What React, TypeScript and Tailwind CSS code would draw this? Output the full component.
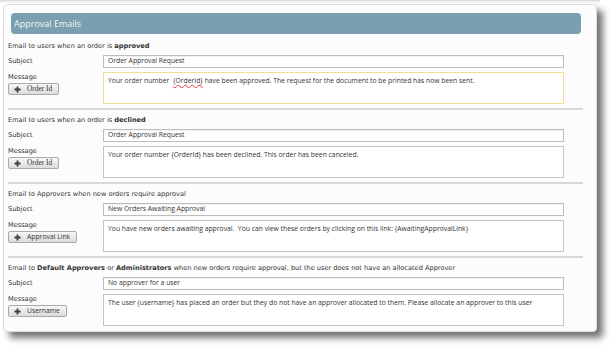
import React from "react";

type Section = {
    title: React.ReactNode;
    subject: string;
    message: React.ReactNode;
    button: string;
    serifButton?: boolean;
    focused?: boolean;
};

const sections: Section[] = [
    {
        title: (
            <>
                Email to users when an order is <b>approved</b>
            </>
        ),
        subject: "Order Approval Request",
        message: (
            <>
                {"Your order number  "}
                <span className="underline decoration-wavy decoration-[#e23b3b] decoration-[0.5px] underline-offset-1">
                    {"{OrderId}"}
                </span>
                {" have been approved. The request for the document to be printed has now been sent."}
            </>
        ),
        button: "Order Id",
        serifButton: true,
        focused: true,
    },
    {
        title: (
            <>
                Email to users when an order is <b>declined</b>
            </>
        ),
        subject: "Order Approval Request",
        message: "Your order number {OrderId} has been declined. This order has been canceled.",
        button: "Order Id",
        serifButton: true,
    },
    {
        title: "Email to Approvers when new orders require approval",
        subject: "New Orders Awaiting Approval",
        message:
            "You have new orders awaiting approval.  You can view these orders by clicking on this link: {AwaitingApprovalLink}",
        button: "Approval Link",
    },
    {
        title: (
            <>
                Email to <b>Default Approvers</b> or <b>Administrators</b> when new orders require approval,
                but the user does not have an allocated Approver
            </>
        ),
        subject: "No approver for a user",
        message:
            "The user {username} has placed an order but they do not have an approver allocated to them. Please allocate an approver to this user",
        button: "Username",
    },
];

const labelFont = "font-['DejaVu_Sans',Verdana,sans-serif] text-[6.6px] text-[#333]";
const fieldFont = "font-['Open_Sans','Liberation_Sans',sans-serif] text-[6.8px] text-[#333]";

const PlusIcon = () => (
    <svg width="7" height="7" viewBox="0 0 7 7" className="shrink-0">
        <path d="M3.5 0.5v6M0.5 3.5h6" stroke="#3d3d3d" strokeWidth="1.8" />
    </svg>
);

const EmailSection: React.FC<{ section: Section; last: boolean }> = ({ section, last }) => (
    <div>
        <div className={`flex h-[12px] items-center whitespace-nowrap ${labelFont}`}>
            <span>{section.title}</span>
        </div>

        <div className="mt-[2px] flex h-[13px]">
            <div className={`flex w-[95px] items-center ${labelFont}`}>Subject</div>
            <div
                className={`flex w-[461px] items-center border border-[#bdbdbd] bg-white pl-[4px] shadow-[inset_0_1px_1px_rgba(0,0,0,0.06)] ${fieldFont}`}
            >
                {section.subject}
            </div>
        </div>

        <div className="mt-[4px] flex h-[32px]">
            <div className="flex w-[95px] flex-col">
                <div className={`flex h-[11px] items-center ${labelFont}`}>Message</div>
                <div className="flex">
                    <div className="flex h-[12px] items-center gap-[6px] rounded-[2px] border border-[#a9a9a9] bg-gradient-to-b from-[#f7f7f7] to-[#dcdcdc] pl-[5px] pr-[6px]">
                        <PlusIcon />
                        <span
                            className={
                                section.serifButton
                                    ? "font-['Liberation_Serif',serif] text-[7.4px] text-[#333]"
                                    : "font-['Open_Sans','Liberation_Sans',sans-serif] text-[6.8px] text-[#333]"
                            }
                        >
                            {section.button}
                        </span>
                    </div>
                </div>
            </div>
            <div
                className={`w-[461px] whitespace-pre-wrap border bg-white pl-[4px] pt-[3px] leading-[9px] ${fieldFont} ${
                    section.focused ? "border-[#f0df8e]" : "border-[#c4c4c4]"
                }`}
            >
                {section.message}
            </div>
        </div>

        {!last && <div className="mt-[4px] mb-[5px] h-[2px] bg-[#d8d8d8]" />}
    </div>
);

const App: React.FC = () => {
    return (
        <div className="min-h-screen bg-white">
            <div className="h-[3px] w-[600px] bg-gradient-to-b from-[#d6d6d6] to-white" />
            <div className="ml-[3px] mt-[1px] w-[594px] rounded-[4px] border border-[#dcdcdc] bg-[#fcfcfc] pb-[5px] pl-[4px] pr-[13px] pt-[8px] shadow-[6px_6px_7px_rgba(0,0,0,0.55)]">
                <div className="ml-[3px] mr-[2px] flex h-[21px] items-center rounded-[4px] bg-[#7a9fb1] pl-[3px] font-['Open_Sans','Liberation_Sans',sans-serif] text-[9px] text-[#f2f6f8]">
                    Approval Emails
                </div>

                <div className="mt-[7px]">
                    {sections.map((section, i) => (
                        <EmailSection key={i} section={section} last={i === sections.length - 1} />
                    ))}
                </div>
            </div>
        </div>
    );
};

export default App;
